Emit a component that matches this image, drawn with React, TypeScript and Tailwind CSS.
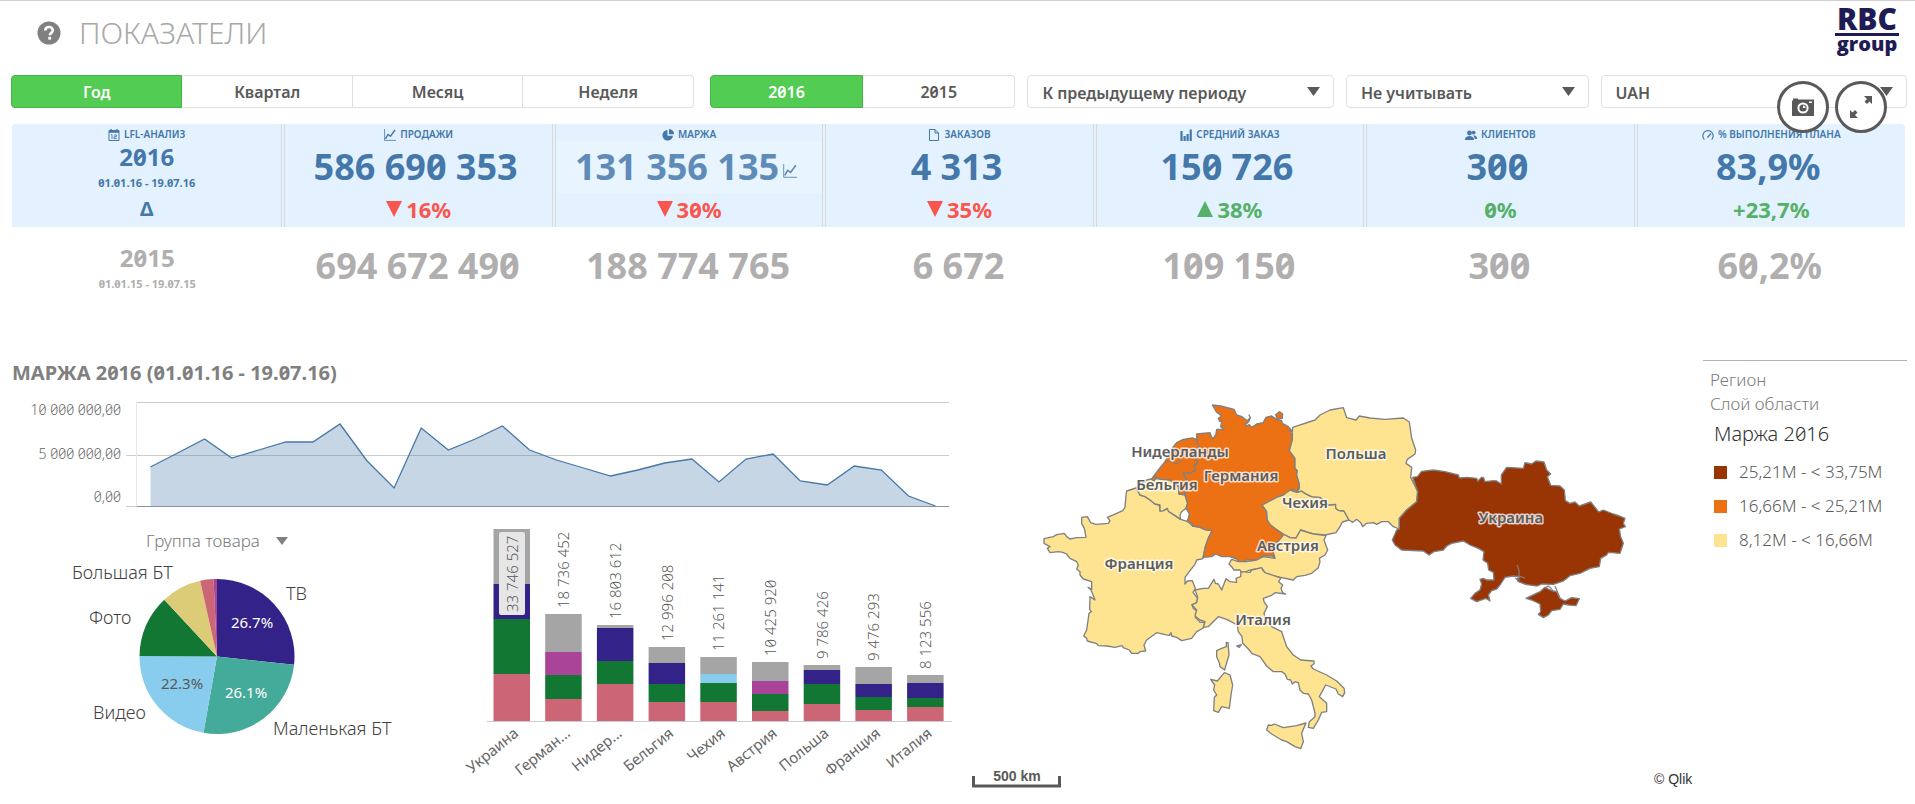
import type { ReactNode } from "react";

const dark = "#595959";

function HelpIcon() {
  return (
    <svg width="24" height="24" viewBox="0 0 24 24" aria-hidden="true">
      <circle cx="12" cy="12" r="11.5" fill="#808080" />
      <path d="M8.3 9.6C8.3 7.3 9.9 6 12 6s3.8 1.3 3.8 3.3c0 2.6-3 2.8-3 5" fill="none" stroke="#fff" strokeWidth="2.6" />
      <rect x="11.3" y="15.8" width="2.8" height="2.8" fill="#fff" />
    </svg>
  );
}

function Icon({ children, className }: { children: ReactNode; className?: string }) {
  return (
    <svg viewBox="0 0 12 12" className={className ?? "h-3 w-3"} fill="none" stroke="currentColor" aria-hidden="true">
      {children}
    </svg>
  );
}

const calendar = (
  <Icon>
    <path d="M1 1.5h10v10H1z" />
    <path d="M1 2.5h10" strokeWidth="2.6" />
    <path d="M3 0v2M9 0v2" strokeWidth="1.4" />
    <path d="M3 6l1-.5V10M6 6h2.4v1.8H6V9.600h2.800" strokeWidth=".9" />
  </Icon>
);
const lineIcon = (
  <Icon>
    <path d="M.6 0v11.400H12" strokeWidth=".8" />
    <path d="M1.500 9.800L4 5.500l2.500 1.700L11 1" strokeWidth="1.400" />
  </Icon>
);
const pieIcon = (
  <Icon>
    <path d="M5.500 1A5.300 5.300 0 1 0 11 6.800H5.500z" fill="currentColor" stroke="none" />
    <path d="M7 0a5 5 0 0 1 5 5.300H7z" fill="currentColor" stroke="none" />
  </Icon>
);
const docIcon = (
  <Icon>
    <path d="M1.500.5h5.500l3.500 3.500v7.500h-9zM7 .5V4h3.500" />
  </Icon>
);
const barsIcon = (
  <Icon>
    <path d="M1.500 2v10M4.600 7v5M7.600 5v7M10.700.5V12" strokeWidth="2.200" />
  </Icon>
);
const usersIcon = (
  <Icon>
    <circle cx="4.500" cy="4" r="2.400" fill="currentColor" stroke="none" />
    <circle cx="8.600" cy="3.600" r="1.900" fill="currentColor" stroke="none" />
    <path d="M0 11c0-3 2-4 4.500-4S9 8 9 11zM9.800 10H12c0-2.500-1.500-3.700-3.500-3.700" fill="currentColor" stroke="none" />
  </Icon>
);
const gaugeIcon = (
  <Icon>
    <path d="M2.400 10.600a5.200 5.200 0 1 1 7.200 0" strokeWidth="1.200" />
    <path d="M5.500 8.500L9 4.500" strokeWidth="1.400" />
  </Icon>
);

type Kpi = {
  icon: ReactNode;
  label: string;
  now: string;
  delta: string;
  dir?: "up" | "down";
  good: boolean;
  before: string;
  active?: boolean;
};

const kpis: Kpi[] = [
  { icon: lineIcon, label: "ПРОДАЖИ", now: "586 690 353", delta: "16%", dir: "down", good: false, before: "694 672 490" },
  { icon: pieIcon, label: "МАРЖА", now: "131 356 135", delta: "30%", dir: "down", good: false, before: "188 774 765", active: true },
  { icon: docIcon, label: "ЗАКАЗОВ", now: "4 313", delta: "35%", dir: "down", good: false, before: "6 672" },
  { icon: barsIcon, label: "СРЕДНИЙ ЗАКАЗ", now: "150 726", delta: "38%", dir: "up", good: true, before: "109 150" },
  { icon: usersIcon, label: "КЛИЕНТОВ", now: "300", delta: "0%", good: true, before: "300" },
  { icon: gaugeIcon, label: "% ВЫПОЛНЕНИЯ ПЛАНА", now: "83,9%", delta: "+23,7%", good: true, before: "60,2%" },
];

function Segments({ items, label, className }: { items: string[]; label: string; className: string }) {
  return (
    <div role="group" aria-label={label} className={`flex h-[33px] ${className}`}>
      {items.map((t, i) => (
        <button
          key={t}
          type="button"
          aria-pressed={i === 0}
          className={
            "flex-1 border pt-px text-base font-semibold first:rounded-l last:rounded-r " +
            (i === 0
              ? "border-[#46b446] bg-[#52cc52] text-white"
              : "border-l-0 border-[#e0e0e0] bg-white text-[#595959]")
          }
        >
          {t}
        </button>
      ))}
    </div>
  );
}

function Picker({ label, value, className }: { label: string; value: string; className: string }) {
  return (
    <div className={`relative h-[33px] ${className}`}>
      <select
        aria-label={label}
        className="h-full w-full appearance-none rounded border border-[#e0e0e0] bg-white pt-0.5 pl-3.5 text-base font-semibold text-[#595959]"
      >
        <option>{value}</option>
      </select>
      <svg width="13" height="9" className="pointer-events-none absolute top-3 right-3.5" aria-hidden="true">
        <path d="M0 0h13L6.500 9z" fill={dark} />
      </svg>
    </div>
  );
}

const trendY = [
  467, 453, 439, 458, 450, 442, 442, 424, 461, 488, 428, 450, 439, 426, 450, 460, 468, 476, 470, 463, 459, 482, 459, 454,
  481, 485, 466, 470, 496, 506,
];
const trend = trendY.map((y, i) => `${(150.5 + i * 27.07).toFixed(1)},${y}`).join(" ");

function TrendChart() {
  return (
    <svg viewBox="0 391 957 129" className="block h-auto w-full" role="img" aria-label="Маржа по неделям">
      <g stroke="#cccccc" strokeWidth="1">
        <path d="M137 402.500H949M126 455.500H949M126 506.500H949" />
        <path d="M136.500 402V506" stroke="#e6e6e6" />
      </g>
      <polygon points={`150.500,506 ${trend} 935.500,506`} fill="#4477aa" fillOpacity=".3" />
      <polyline points={trend} fill="none" stroke="#4477aa" strokeWidth="1.300" />
      <path d="M137 506.500H949" stroke="#8b949d" />
      <g fill="#666" fontSize="14" fontWeight="300" textAnchor="end">
        <text x="121" y="415">10 000 000,00</text>
        <text x="121" y="459">5 000 000,00</text>
        <text x="121" y="502">0,00</text>
      </g>
    </svg>
  );
}

const slices: [number, number, string][] = [
  [0, 26.7, "#332288"],
  [26.7, 52.8, "#44aa99"],
  [52.8, 75.1, "#88ccee"],
  [75.1, 88.1, "#117733"],
  [88.1, 96.5, "#ddcc77"],
  [96.5, 99.3, "#cc6677"],
  [99.3, 100, "#aa4499"],
];

function PieChart() {
  const cx = 217;
  const cy = 656.5;
  const r = 77.5;
  const at = (p: number) => {
    const a = (p / 100) * Math.PI * 2;
    return `${(cx + r * Math.sin(a)).toFixed(2)} ${(cy - r * Math.cos(a)).toFixed(2)}`;
  };
  return (
    <svg viewBox="0 562 460 242" className="block h-auto w-full" role="img" aria-label="Группа товара">
      {slices.map(([a, b, c]) => (
        <path key={a} d={`M${cx} ${cy}L${at(a)}A${r} ${r} 0 0 1 ${at(b)}Z`} fill={c} />
      ))}
      <g fontSize="18" fontWeight="300" fill="#404040">
        <text x="72" y="579">Большая БТ</text>
        <text x="286" y="600">ТВ</text>
        <text x="89" y="624">Фото</text>
        <text x="93" y="719">Видео</text>
        <text x="273" y="735">Маленькая БТ</text>
      </g>
      <g fontSize="15" textAnchor="middle" fill="#fff">
        <text x="252" y="628">26.7%</text>
        <text x="246" y="698">26.1%</text>
        <text x="182" y="689" fill="#595959">22.3%</text>
      </g>
    </svg>
  );
}

const grey = "#a5a5a5";
const navy = "#332288";
const purple = "#aa4499";
const bars: { name: string; value: string; stack: [number, string][] }[] = [
  { name: "Украина", value: "33 746 527", stack: [[529, grey], [584, navy], [619, "#117733"], [674, "#cc6677"]] },
  { name: "Герман...", value: "18 736 452", stack: [[614, grey], [652, purple], [675, "#117733"], [699, "#cc6677"]] },
  { name: "Нидер...", value: "16 803 612", stack: [[625, grey], [628, navy], [661, "#117733"], [684, "#cc6677"]] },
  { name: "Бельгия", value: "12 996 208", stack: [[647, grey], [663, navy], [684, "#117733"], [702, "#cc6677"]] },
  { name: "Чехия", value: "11 261 141", stack: [[657, grey], [674, "#88ccee"], [683, "#117733"], [702, "#cc6677"]] },
  { name: "Австрия", value: "10 425 920", stack: [[662, grey], [681, purple], [694, "#117733"], [711, "#cc6677"]] },
  { name: "Польша", value: "9 786 426", stack: [[665, grey], [670, navy], [684, "#117733"], [704, "#cc6677"]] },
  { name: "Франция", value: "9 476 293", stack: [[667, grey], [684, navy], [697, "#117733"], [710, "#cc6677"]] },
  { name: "Италия", value: "8 123 556", stack: [[675, grey], [683, navy], [698, "#117733"], [707, "#cc6677"]] },
];

function BarChart() {
  return (
    <svg viewBox="460 520 497 284" className="block h-auto w-full" role="img" aria-label="Маржа по странам">
      {bars.map((b, i) => {
        const x = 493.5 + i * 51.7;
        const inside = i === 0;
        const ty = inside ? 612 : b.stack[0][0] - 6;
        return (
          <g key={b.name}>
            {b.stack.map(([y, c], k) => (
              <rect key={y} x={x} y={y} width="36.500" height={(b.stack[k + 1]?.[0] ?? 721) - y} fill={c} />
            ))}
            {inside && <rect x="499" y="532" width="26" height="83" rx="2" fill="#e6e6e6" />}
            <text transform={`translate(${x + 24} ${ty}) rotate(-90)`} fontSize="15" fontWeight="300" fill="#595959">
              {b.value}
            </text>
            <text transform={`translate(${x + 26} 735) rotate(-39)`} fontSize="15" textAnchor="end" fill="#666">
              {b.name}
            </text>
          </g>
        );
      })}
      <path d="M487 721.500H952" stroke="#cccccc" />
    </svg>
  );
}

const yellow = "#fee391";
const orange = "#ec7014";
const brown = "#993404";

const western: [string, string][] = [
  [yellow, "M290 333L318 324 330 345 345 350 360 360 375 372 388 375 390 390 400 392 412 385 425 400 440 410 452 418 472 424 488 438 508 441 525 449 546 452 535 475 526 500 519 536 500 540 495 553 480 572 465 592 465 612 472 603 487 602 496 625 489 637 503 655 500 668 486 674 490 685 500 692 496 712 510 726 524 728 520 744 500 755 485 775 455 782 440 772 425 768 423 758 418 766 405 764 380 758 350 780 342 795 347 813 330 815 325 820 305 820 298 810 280 803 276 797 255 802 232 798 205 797 200 791 172 783 170 775 161 768 170 750 177 700 184 695 179 688 180 650 195 660 188 642 183 630 174 622 185 628 185 605 160 597 150 585 150 575 140 567 145 556 140 545 120 535 110 522 98 517 85 515 60 518 52 505 60 500 42 490 42 476 70 470 80 464 103 460 110 470 120 477 140 473 168 472 163 445 155 430 155 412 172 410 182 428 198 433 235 430 240 422 232 412 260 400 278 392 285 382 288 345z"],
  [yellow, "M318 324L350 300 372 295 395 298 420 300 445 320 447 342 465 345 473 370 468 385 455 395 450 405 452 418 440 410 425 400 415 394 412 385 400 392 390 394 390 375 375 372 360 360 345 350 330 345z"],
  [orange, "M500 178L508 190 505 205 500 215 497 235 503 250 493 256 497 270 484 278 460 280 470 300 470 330 462 343 447 342 447 320 420 300 395 298 380 292 372 303 362 297 378 290 368 292 385 270 405 245 430 200 440 188 460 178 487 174z"],
  [orange, "M547 75L572 78 612 88 620 105 636 110 652 122 661 113 657 105 661 113 656 125 645 135 648 138 658 134 665 142 680 132 700 128 708 112 725 108 740 118 755 122 757 130 775 140 788 155 778 150 787 165 787 180 778 212 795 235 795 265 802 272 800 285 808 312 808 325 800 335 787 328 780 335 760 345 740 352 725 365 697 375 710 395 712 420 722 435 735 445 762 463 755 480 740 490 728 510 735 535 725 528 700 528 680 540 650 540 630 548 620 537 600 530 575 530 557 522 545 530 519 532 526 500 535 475 546 452 525 449 508 441 488 438 484 428 472 424 478 402 468 385 473 370 465 345 470 330 470 300 460 280 484 278 497 270 493 256 503 250 497 235 507 205 500 180 500 162 540 158 545 172 550 175 558 162 560 148 583 148 572 140 575 125 568 123 565 115 575 108 560 97z"],
  [orange, "M737 104L748 95 758 102 757 115 742 118z"],
  [yellow, "M760 345L780 330 800 337 815 333 825 340 845 350 870 352 895 375 917 373 917 385 925 391 942 393 957 420 937 426 930 440 918 458 885 465 850 462 830 456 812 450 798 474 780 473 765 466 735 445 722 435 712 420 710 395 697 375 740 352z"],
  [yellow, "M812 450L830 456 850 462 888 467 882 480 893 510 885 525 868 535 870 545 865 563 845 580 825 586 800 590 790 600 740 590 705 580 698 567 690 565 660 570 635 580 630 570 612 570 605 560 597 552 605 538 625 545 650 545 680 540 700 530 735 535 728 510 740 490 762 463 780 473 798 474z"],
];

const eastern: [string, string][] = [
  [yellow, "M-112 142L-45 120-30 105 0 90 40 83 50 113 78 120 88 108 120 114 165 118 220 114 238 126 245 175 257 210 255 222 232 238 228 250 245 262 242 292 255 318 263 335 260 365 230 390 208 415 208 447 190 440 175 425 155 425 140 433 130 428 110 430 98 440 92 428 80 418 68 427 57 420 42 393 25 391 17 385 17 373-5 375-30 352-55 350-75 340-85 333-100 337-92 325-92 312-100 285-98 272-105 265-105 235-122 212-113 180-113 160z"],
  [brown, "M248 292L262 290 275 274 310 270 345 275 385 285 388 294 410 292 440 295 443 304 455 292 460 292 465 305 490 302 500 303 514 312 514 285 530 262 580 265 585 248 605 252 618 243 642 246 650 270 662 282 652 290 662 316 690 318 703 330 706 362 720 370 735 366 748 378 782 366 800 388 806 396 820 390 850 402 868 408 885 415 880 430 886 440 868 447 872 470 880 490 870 520 835 517 830 525 812 535 808 560 780 565 750 580 720 587 700 603 670 613 635 612 622 618 590 614 565 605 560 597 570 590 550 588 525 592 510 615 500 627 485 632 475 645 480 663 468 655 440 665 422 655 435 640 450 630 455 612 450 598 460 595 470 600 492 600 490 577 476 570 473 550 459 540 462 515 445 505 420 495 400 483 365 490 350 498 340 510 312 515 297 525 280 513 215 510 195 495 187 480 200 450 208 447 208 415 230 390 260 365 263 335z"],
  [brown, "M588 655L630 635 645 622 665 632 680 635 690 655 705 663 725 653 748 656 738 677 715 675 700 672 690 688 665 692 655 705 640 713 625 703 632 695 630 672 605 660z"],
];

const southern: [string, string][] = [
  [yellow, "M45 150L70 145 85 145 102 118 106 130 115 132 125 150 138 116 150 125 170 127 168 115 182 110 183 95 210 97 215 90 245 83 248 90 255 98 303 114 296 125 308 135 303 145 308 158 317 162 285 158 275 166 250 175 252 185 262 200 252 220 256 235 275 260 305 275 320 320 340 345 362 360 402 363 402 371 393 378 400 387 440 405 470 423 492 445 494 458 488 470 475 462 468 447 437 435 418 470 440 490 440 515 425 517 415 540 400 565 385 562 388 545 405 530 405 520 400 500 395 480 385 462 370 460 360 450 355 428 345 425 337 432 332 420 322 418 315 402 305 395 280 395 260 378 240 350 215 340 208 330 188 310 186 290 175 275 172 255 140 238 115 230 95 250 85 260 70 262 75 245 60 240 45 228 50 210 36 195 50 188 53 172z"],
  [yellow, "M378 549L365 580 370 605 362 626 345 620 320 605 305 600 275 582 260 570 265 555 275 556 283 552 310 563 350 557z"],
  [yellow, "M139 307L144 308 147 345 138 375 134 390 120 380 118 368 110 350 110 332 125 325 139 320z"],
  [yellow, "M133 398L150 405 158 435 153 465 148 505 125 500 115 517 101 512 103 472 110 465 101 450 104 435 92 418 112 423z"],
  [yellow, "M170 318L184 314 178 322z"],
];

function Shapes({ items, shift }: { items: [string, string][]; shift: string }) {
  return (
    <g transform={shift} stroke="#808080" strokeWidth="4" strokeLinejoin="round" fill="none">
      {items.map(([fill, d]) => (
        <path key={d} d={d} fill={fill} />
      ))}
    </g>
  );
}

const places: [string, number, number][] = [
  ["Нидерланды", 1180, 457],
  ["Германия", 1241, 481],
  ["Бельгия", 1167, 490],
  ["Польша", 1356, 459],
  ["Чехия", 1305, 508],
  ["Австрия", 1288, 551],
  ["Франция", 1139, 569],
  ["Италия", 1263, 625],
  ["Украина", 1511, 523],
];

function RegionMap() {
  return (
    <svg viewBox="957 355 746 449" className="block h-auto w-full" role="img" aria-label="Карта регионов">
      <Shapes items={western} shift="translate(1030 380) scale(.33333)" />
      <Shapes items={eastern} shift="translate(1330 380) scale(.33333)" />
      <Shapes items={southern} shift="translate(1180 540) scale(.33333)" />
      <g fill="none" stroke="#808080" strokeWidth="1.200">
        <path d="M1165 461l7 0 4 3 6-4M1517 565l2 5v6l6 2M1515 578l5 2M1555 586l5 12M1550 587l4 5M1545 588l3-2 3 2" />
      </g>
      <g
        fontSize="15"
        fontWeight="600"
        textAnchor="middle"
        fill="#5c5c5c"
        stroke="#fff"
        strokeOpacity=".75"
        strokeWidth="3"
        strokeLinejoin="round"
        paintOrder="stroke"
      >
        {places.map(([name, x, y]) => (
          <text key={name} x={x} y={y}>
            {name}
          </text>
        ))}
      </g>
      <path d="M973.500 776v10h86v-10" fill="none" stroke="#595959" strokeWidth="3" />
      <g fontFamily="'Liberation Sans', Arial, sans-serif">
        <text x="1017" y="781" fontSize="14" fontWeight="700" textAnchor="middle" fill="#595959">500 km</text>
        <text x="1654" y="784" fontSize="14" fill="#333">© Qlik</text>
      </g>
    </svg>
  );
}

const legend = [
  { swatch: "bg-[#993404]", text: "25,21M - < 33,75M" },
  { swatch: "bg-[#ec7014]", text: "16,66M - < 25,21M" },
  { swatch: "bg-[#fee391]", text: "8,12M - < 16,66M" },
];

export default function App() {
  return (
    <div className="bg-white font-['Noto_Sans',sans-serif] slashed-zero">
      <header className="flex h-[75px] items-start justify-between border-t border-[#d0d0d0] pr-4 pl-[37px]">
        <div className="flex items-center gap-[18px] pt-2.5">
          <HelpIcon />
          <h1 className="text-3xl leading-11 font-light text-[#a9a9a9]">ПОКАЗАТЕЛИ</h1>
        </div>
        <div className="flex w-16 flex-col items-center pt-1 font-['Open_Sans',sans-serif] font-extrabold text-[#1e1b55]">
          <span className="text-3xl leading-7">RBC</span>
          <span className="h-[3px] w-full bg-[#1e1b55]" />
          <span className="text-xl leading-4">group</span>
        </div>
      </header>

      <div className="relative flex gap-3 pr-2 pl-[11px]">
        <Segments label="Период" items={["Год", "Квартал", "Месяц", "Неделя"]} className="mr-1 grow-[684] basis-0" />
        <Segments label="Год" items={["2016", "2015"]} className="grow-[306] basis-0" />
        <Picker label="Сравнение" value="К предыдущему периоду" className="grow-[307] basis-0" />
        <Picker label="Учёт" value="Не учитывать" className="grow-[243] basis-0" />
        <Picker label="Валюта" value="UAH" className="grow-[307] basis-0" />
        <div className="absolute top-1.5 right-7 flex gap-1.5">
          <button type="button" aria-label="Снимок" className="flex h-[52px] w-[52px] items-center justify-center rounded-full border-[3px] border-[#595959] bg-white">
            <svg width="22" height="18" viewBox="0 0 22 18" aria-hidden="true">
              <path d="M1 2.500V.5h5v1h15.500a.5.5 0 0 1 .5.500v15.500a.5.5 0 0 1-.5.500H.5a.5.5 0 0 1-.5-.5V3a.5.5 0 0 1 .5-.500z" fill={dark} />
              <circle cx="11" cy="10" r="4.600" fill={dark} stroke="#fff" strokeWidth="2" />
              <path d="M11 10V7.500a2.500 2.500 0 0 1 2.500 2.500z" fill="#fff" />
              <rect x="17" y="3.500" width="3" height="1.500" fill="#fff" />
            </svg>
          </button>
          <button type="button" aria-label="Развернуть" className="flex h-[52px] w-[52px] items-center justify-center rounded-full border-[3px] border-[#595959] bg-white">
            <svg width="24" height="24" viewBox="0 0 24 24" aria-hidden="true">
              <path d="M15 1h8v8l-2.500-2.500-2.500 2.500-2.500-2.500 2.500-2.500zM9 23H1v-8l2.500 2.500 2.500-2.500 2.500 2.500-2.500 2.500z" fill={dark} />
            </svg>
          </button>
        </div>
      </div>

      <section className="mt-4 grid grid-cols-7 pr-2.5 pl-3">
        <div className="text-center font-bold">
          <div className="h-[103px] rounded-tl border-r border-[#d9d9d9] bg-[#e3f2fe] text-[#4477aa]">
            <div className="flex h-[17px] items-center justify-center gap-1 pt-1 text-[10px] font-semibold">
              {calendar}
              LFL-АНАЛИЗ
            </div>
            <div className="text-2xl leading-8">2016</div>
            <div className="text-[11px] leading-5">01.01.16 - 19.07.16</div>
            <div className="text-xl leading-8">Δ</div>
          </div>
          <div className="h-[78px] pt-[15px] text-[#b0aeae]">
            <div className="text-2xl leading-8">2015</div>
            <div className="text-[11px] leading-5">01.01.15 - 19.07.15</div>
          </div>
        </div>
        {kpis.map((k) => (
          <div key={k.label} className="group text-center font-bold">
            <div className="h-[103px] bg-[#e3f2fe] pl-0.5 group-last:rounded-tr">
              <div className="h-full border-x border-[#d9d9d9] text-[#4477aa] group-last:border-r-0">
                <div className="flex h-[17px] items-center justify-center gap-1 pt-1 text-[10px] font-semibold">
                  {k.icon}
                  {k.label}
                </div>
                <div
                  className={
                    "flex h-13 items-center justify-center gap-1 pr-1.5 text-4xl " +
                    (k.active ? "bg-[#e8f4fe] text-[#5f8bb8]" : "")
                  }
                >
                  {k.now}
                  {k.active && (
                    <Icon className="mt-2 h-3.5 w-3.5">
                      <path d="M.6 0v11.400H12" strokeWidth=".8" />
                      <path d="M1.500 9.800L4 5.500l2.500 1.700L11 1" strokeWidth="1.400" />
                    </Icon>
                  )}
                </div>
                <div
                  className={
                    "flex h-8 items-center justify-center gap-1 text-[22px] " +
                    (k.good ? "text-[#55b068]" : "text-[#f9564f]")
                  }
                >
                  {k.dir && (
                    <svg width="16" height="16" viewBox="0 0 16 16" fill="currentColor" aria-hidden="true">
                      <path d={k.dir === "down" ? "M0 0h16L8 16z" : "M0 16h16L8 0z"} />
                    </svg>
                  )}
                  {k.delta}
                </div>
              </div>
            </div>
            <div className="flex h-[78px] items-center justify-center text-4xl text-[#b0aeae]">{k.before}</div>
          </div>
        ))}
      </section>

      <main className="mt-[50px] grid grid-cols-[957fr_746fr_212fr]">
        <section>
          <h2 className="pl-3 text-xl leading-9 font-bold text-[#808080]">МАРЖА 2016 (01.01.16 - 19.07.16)</h2>
          <TrendChart />
          <div className="grid grid-cols-[460fr_497fr]">
            <div>
              <div className="flex h-[42px] items-center pl-[146px]">
                <button type="button" className="flex items-center gap-4 text-[17px] font-light text-[#7a7a7a]">
                  Группа товара
                  <svg width="12" height="8" aria-hidden="true">
                    <path d="M0 0h12L6 8z" fill="#808080" />
                  </svg>
                </button>
              </div>
              <PieChart />
            </div>
            <BarChart />
          </div>
        </section>

        <RegionMap />

        <aside className="mt-[5px] mr-2 border-t border-[#b3b3b3] pt-[7px] pl-[7px]">
          <p className="text-[17px] leading-6 font-light text-[#7a7a7a]">Регион</p>
          <p className="text-[17px] leading-6 font-light text-[#7a7a7a]">Слой области</p>
          <h3 className="pl-1 text-xl leading-9 font-light text-[#333]">Маржа 2016</h3>
          <ul className="pt-[3px] pl-1">
            {legend.map((l) => (
              <li key={l.text} className="flex h-[34px] items-center gap-3 text-[17px] font-light text-[#595959]">
                <span className={`h-[13px] w-[13px] ${l.swatch}`} />
                {l.text}
              </li>
            ))}
          </ul>
        </aside>
      </main>
    </div>
  );
}
